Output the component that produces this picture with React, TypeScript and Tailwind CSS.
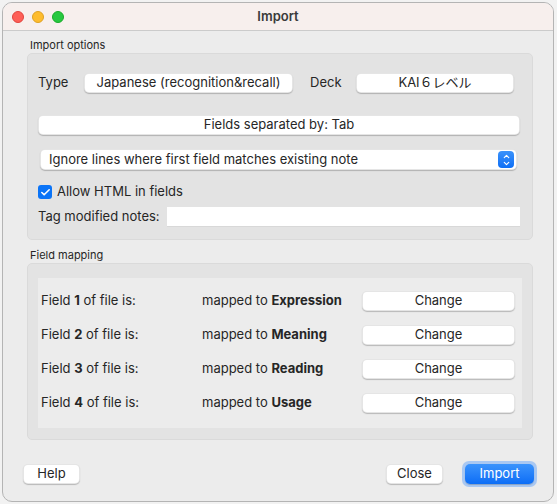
import { Check, ChevronUp, ChevronDown } from "lucide-react";

const font = { fontFamily: "Inter, 'Noto Sans CJK JP', sans-serif" };

const MacButton = ({ children, className = "" }: { children: React.ReactNode; className?: string }) => (
  <div
    className={`h-[20px] flex items-center justify-center bg-white rounded-[5px] border-[0.5px] border-black/10 shadow-[0_1px_1px_rgba(0,0,0,0.22)] text-[13px] text-[#262626] ${className}`}
  >
    {children}
  </div>
);

const mappings = [
  { n: "1", to: "Expression" },
  { n: "2", to: "Meaning" },
  { n: "3", to: "Reading" },
  { n: "4", to: "Usage" },
];

export default function App() {
  return (
    <div className="w-[557px] h-[504px] bg-[#f2f2f2] pt-[2px] pl-[2px]" style={font}>
      <div className="w-[552px] h-[500px] rounded-[10px] border border-[#b4b4b4] bg-[#ececec] overflow-hidden flex flex-col text-[#262626]">
        {/* Title bar */}
        <div className="h-[28px] shrink-0 bg-[#f7efed] border-b border-[#cbcbcb] grid grid-cols-[1fr_auto_1fr] items-center">
          <div className="flex items-center gap-[8px] pl-[9px]">
            <span className="w-[12px] h-[12px] rounded-full bg-[#fe5f57] border-[0.5px] border-[#e0443e]" />
            <span className="w-[12px] h-[12px] rounded-full bg-[#febc2e] border-[0.5px] border-[#dea123]" />
            <span className="w-[12px] h-[12px] rounded-full bg-[#28c840] border-[0.5px] border-[#1aab29]" />
          </div>
          <div className="text-[13px] font-semibold text-[#3a3a3a]">Import</div>
          <div />
        </div>

        {/* Body */}
        <div className="flex-1 pl-[24px] pr-[20px] flex flex-col">
          <div className="mt-[8px] mb-[1px] pl-[3px] text-[11px] leading-[13px]">Import options</div>
          <div className="h-[187px] rounded-[5px] bg-[#e3e3e3] border border-[#dadada] pt-[19px] pl-[10px] pr-[12px] flex flex-col">
            <div className="flex items-center h-[20px]">
              <span className="text-[13px] w-[46px]">Type</span>
              <MacButton className="w-[209px]">Japanese (recognition&amp;recall)</MacButton>
              <span className="text-[13px] ml-[17px] w-[46px]">Deck</span>
              <MacButton className="w-[158px]">KAI６レベル</MacButton>
            </div>
            <MacButton className="w-[482px] mt-[22px]">Fields separated by: Tab</MacButton>
            <div className="mt-[14px] ml-[2px] w-[477px] h-[21px] bg-white rounded-[5px] border-[0.5px] border-black/10 shadow-[0_1px_1px_rgba(0,0,0,0.22)] flex items-center justify-between pl-[8px] pr-[2px]">
              <span className="text-[13px]">Ignore lines where first field matches existing note</span>
              <span className="w-[16px] h-[17px] rounded-[4px] bg-gradient-to-b from-[#3a92fb] to-[#0b6ef5] flex flex-col items-center justify-center text-white">
                <ChevronUp size={9} strokeWidth={3} className="-mb-[1px]" />
                <ChevronDown size={9} strokeWidth={3} className="-mt-[1px]" />
              </span>
            </div>
            <div className="mt-[14px] flex items-center h-[16px]">
              <span className="w-[14px] h-[14px] rounded-[3px] bg-[#0b74f7] flex items-center justify-center text-white">
                <Check size={11} strokeWidth={3.5} />
              </span>
              <span className="ml-[5px] text-[13px]">Allow HTML in fields</span>
            </div>
            <div className="mt-[7px] flex items-center h-[20px]">
              <span className="text-[13px] w-[129px]">Tag modified notes:</span>
              <div className="w-[353px] h-[20px] bg-white border-b border-[#d8d8d8]" />
            </div>
          </div>

          <div className="mt-[9px] mb-[1px] pl-[3px] text-[11px] leading-[13px]">Field mapping</div>
          <div className="h-[177px] rounded-[5px] bg-[#e3e3e3] border border-[#dadada] pt-[14px] pl-[10px] pr-[10px] pb-[11px]">
            <div className="h-full bg-[#ececec] pt-[13px] flex flex-col gap-[14px]">
              {mappings.map((m) => (
                <div key={m.n} className="flex items-center h-[20px] text-[13px]">
                  <span className="pl-[3px] w-[164px]">
                    Field <b>{m.n}</b> of file is:
                  </span>
                  <span className="w-[160px]">
                    mapped to <b>{m.to}</b>
                  </span>
                  <MacButton className="w-[153px]">Change</MacButton>
                </div>
              ))}
            </div>
          </div>

          <div className="mt-[21px] -mr-[4px] flex items-center justify-between">
            <MacButton className="w-[57px] -ml-[4px]">Help</MacButton>
            <div className="flex items-center gap-[19px]">
              <MacButton className="w-[57px]">Close</MacButton>
              <div className="rounded-[7px] p-[3px] bg-[#8db9f5]/70">
                <div className="w-[69px] h-[20px] rounded-[5px] bg-gradient-to-b from-[#3a93fc] to-[#0a6df6] text-white text-[13px] flex items-center justify-center shadow-[0_1px_1px_rgba(0,0,0,0.2)]">
                  Import
                </div>
              </div>
            </div>
          </div>
        </div>
      </div>
    </div>
  );
}
